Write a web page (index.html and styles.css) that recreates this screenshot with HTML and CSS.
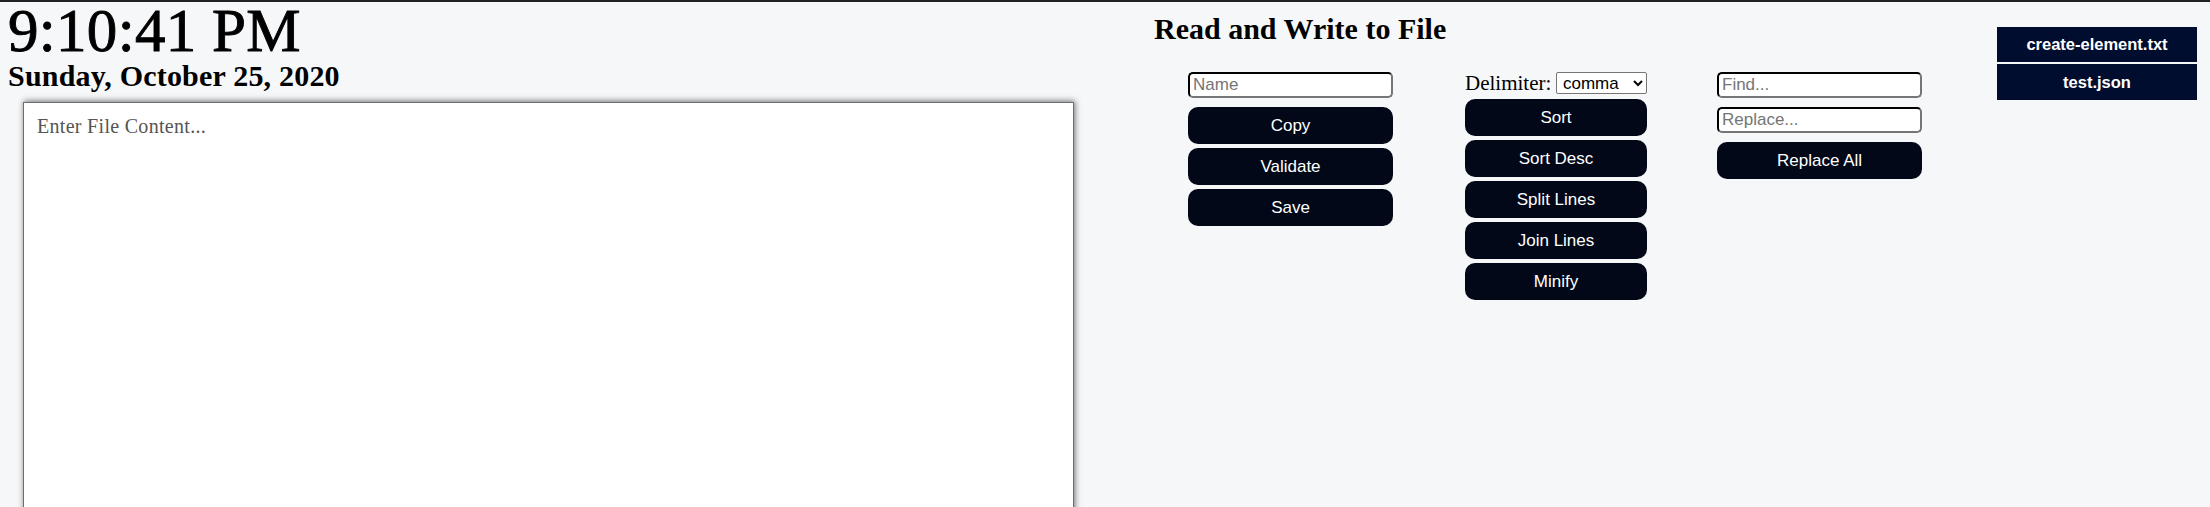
FILE: index.html
```html
<!DOCTYPE html>
<html lang="en">
<head>
<meta charset="utf-8">
<title>Read and Write to File</title>
<link rel="stylesheet" href="styles.css">
</head>
<body>
<div class="page">
  <section class="left">
    <div class="clock">9:10:41 PM</div>
    <div class="date">Sunday, October 25, 2020</div>
    <textarea class="content" placeholder="Enter File Content..."></textarea>
  </section>
  <section class="center">
    <h1 class="title">Read and Write to File</h1>
    <div class="tools">
      <div class="col col-file">
        <input class="field" type="text" placeholder="Name">
        <div class="stack stack-file">
          <button class="btn">Copy</button>
          <button class="btn">Validate</button>
          <button class="btn">Save</button>
        </div>
      </div>
      <div class="col col-delim">
        <label class="delim">Delimiter: <select class="select"><option>comma</option></select></label>
        <div class="stack stack-delim">
          <button class="btn">Sort</button>
          <button class="btn">Sort Desc</button>
          <button class="btn">Split Lines</button>
          <button class="btn">Join Lines</button>
          <button class="btn">Minify</button>
        </div>
      </div>
      <div class="col col-find">
        <input class="field" type="text" placeholder="Find...">
        <input class="field field-gap" type="text" placeholder="Replace...">
        <button class="btn btn-replace">Replace All</button>
      </div>
    </div>
  </section>
  <aside class="files">
    <button class="file">create-element.txt</button>
    <button class="file">test.json</button>
  </aside>
</div>
</body>
</html>
```
FILE: styles.css
```css
html, body {
  margin: 0;
  padding: 0;
}
body {
  background: #f6f7f9;
  border-top: 2px solid #202124;
  height: 505px;
  overflow: hidden;
  font-family: "Liberation Serif", "Times New Roman", serif;
  color: #000;
}
.page {
  display: flex;
  align-items: flex-start;
  padding: 0 8px;
}
.left {
  width: 1077px;
  flex: none;
  display: flex;
  flex-direction: column;
}
.clock {
  font-size: 61px;
  line-height: 60px;
  margin-top: -1px;
  letter-spacing: 0.3px;
  -webkit-text-stroke: 0.9px #000;
}
.date {
  font-size: 30px;
  line-height: 30px;
  font-weight: bold;
  letter-spacing: 0.2px;
}
.content {
  margin: 11px 0 0 15px;
  width: 1051px;
  height: 430px;
  box-sizing: border-box;
  border: 1px solid #6e6e6e;
  box-shadow: 1px -1px 6px rgba(0, 0, 0, 0.55);
  background: #fff;
  padding: 12px 13px;
  font-family: "Liberation Serif", "Times New Roman", serif;
  font-size: 20px;
  letter-spacing: 0.3px;
  resize: none;
  outline: none;
}
.content::placeholder {
  color: #555;
}
.center {
  flex: none;
  width: 900px;
  display: flex;
  flex-direction: column;
}
.title {
  margin: 10px 0 0 69px;
  font-size: 30px;
  line-height: 34px;
  font-weight: bold;
}
.tools {
  display: flex;
  align-items: flex-start;
  margin: 26px 0 0 103px;
}
.col {
  display: flex;
  flex-direction: column;
}
.col-file {
  width: 205px;
}
.col-delim {
  width: 182px;
  margin-left: 72px;
}
.col-find {
  width: 205px;
  margin-left: 70px;
}
.field {
  width: 205px;
  height: 26px;
  box-sizing: border-box;
  border: 2px inset #767676;
  border-top-color: #222;
  border-left-color: #222;
  border-radius: 5px;
  background: #fff;
  padding: 0 3px;
  font-family: "Liberation Sans", Arial, sans-serif;
  font-size: 17px;
  outline: none;
}
.field::placeholder {
  color: #757575;
}
.field-gap {
  margin-top: 9px;
}
.stack {
  display: flex;
  flex-direction: column;
  gap: 4px;
}
.stack-file {
  margin-top: 9px;
}
.stack-delim {
  margin-top: 5px;
}
.btn {
  height: 37px;
  width: 100%;
  border: none;
  border-radius: 10px;
  background: #020817;
  color: #fff;
  font-family: "Liberation Sans", Arial, sans-serif;
  font-size: 17px;
  padding: 0;
  cursor: pointer;
}
.btn-replace {
  margin-top: 9px;
}
.delim {
  display: flex;
  align-items: center;
  justify-content: space-between;
  height: 22px;
  font-size: 21px;
}
.select {
  width: 91px;
  height: 22px;
  box-sizing: border-box;
  border: 1px solid #767676;
  border-radius: 2px;
  background: #fff;
  font-family: "Liberation Sans", Arial, sans-serif;
  font-size: 17px;
  padding: 0 2px;
}
.files {
  margin-left: auto;
  margin-right: 5px;
  margin-top: 25px;
  display: flex;
  flex-direction: column;
  gap: 2px;
  width: 200px;
}
.file {
  height: 35px;
  border: none;
  background: #010d2e;
  color: #fff;
  font-family: "Liberation Sans", Arial, sans-serif;
  font-weight: bold;
  font-size: 16.5px;
  padding: 0;
}
.file + .file {
  height: 36px;
}
```
